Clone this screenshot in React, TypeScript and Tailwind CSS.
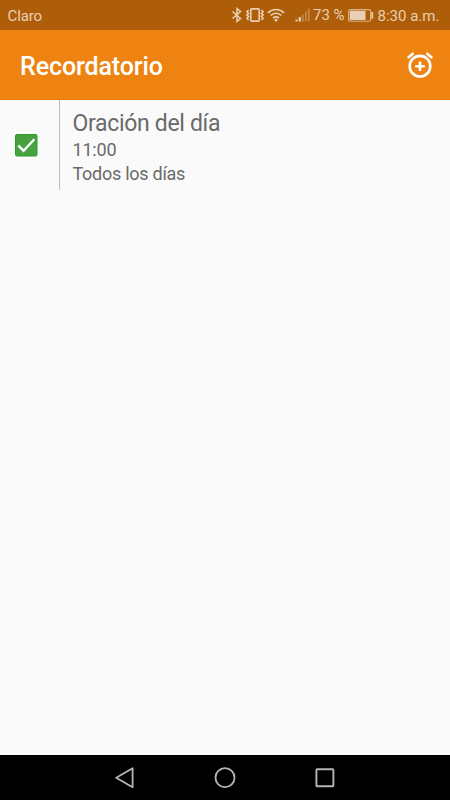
const BluetoothIcon = () => (
  <svg width="12" height="16" viewBox="0 0 12 16" fill="none" stroke="currentColor" strokeWidth="1.5">
    <path d="M1.5 4.5 9.5 11.5 6 14.5V1.5L9.5 4.5 1.5 11.5" />
  </svg>
);

const VibrateIcon = () => (
  <svg width="18" height="14" viewBox="0 0 18 14" fill="none" stroke="currentColor" strokeWidth="1.6">
    <rect x="4.8" y="0.9" width="8.4" height="12.2" rx="0.8" />
    <path d="M2.6 2 1 3.7 2.6 5.4 1 7 2.6 8.6 1 10.3 2.6 12" />
    <path d="M15.4 2 17 3.7 15.4 5.4 17 7 15.4 8.6 17 10.3 15.4 12" />
  </svg>
);

const WifiIcon = () => (
  <svg width="18" height="14" viewBox="0 0 18 14" fill="none" stroke="currentColor" strokeWidth="1.7">
    <path d="M1 4.8a11.3 11.3 0 0 1 16 0" />
    <path d="M3.6 7.5a7.6 7.6 0 0 1 10.8 0" />
    <path d="M6.1 10.1a4.1 4.1 0 0 1 5.8 0" />
    <circle cx="9" cy="12.2" r="1.4" fill="currentColor" stroke="none" />
  </svg>
);

const SignalIcon = () => (
  <svg width="15" height="14" viewBox="0 0 15 14" fill="currentColor">
    <rect x="0.5" y="11.5" width="2" height="2" />
    <rect x="3.7" y="9" width="2.2" height="4.5" />
    <rect x="7" y="6.5" width="1.6" height="7" opacity="0.4" />
    <rect x="10" y="3.5" width="1.6" height="10" opacity="0.4" />
    <rect x="13" y="0.8" width="1.6" height="12.7" opacity="0.4" />
  </svg>
);

const BatteryIcon = () => (
  <svg width="26" height="13" viewBox="0 0 26 13" fill="none">
    <rect x="0.6" y="0.6" width="22" height="11.6" rx="1.5" stroke="currentColor" strokeWidth="1.1" opacity="0.75" />
    <rect x="1.8" y="1.8" width="15.7" height="9.2" fill="currentColor" />
    <rect x="23.3" y="3" width="1.8" height="6.8" rx="0.5" fill="currentColor" />
  </svg>
);

const AddAlarmIcon = () => (
  <svg width="28" height="28" viewBox="0 0 28 28" fill="none" stroke="currentColor" strokeWidth="2.6">
    <circle cx="14" cy="15.2" r="10.3" />
    <path d="M14 10.4v9.6M9.2 15.2h9.6" />
    <path d="M1.8 6.9 7.6 2M26.2 6.9 20.4 2" />
  </svg>
);

const CheckedBox = () => (
  <svg width="23" height="23" viewBox="0 0 23 23" fill="none">
    <rect x="0.5" y="0.5" width="21.5" height="21.5" rx="1.4" fill="#47a140" stroke="#2a9e26" />
    <path d="M3.3 11.6 8.6 16.7 19.3 5.3" stroke="#fff" strokeWidth="2.4" />
  </svg>
);

function StatusBar() {
  return (
    <div className="flex h-[30px] items-center bg-[#ae5e09] pl-[7.5px] text-[15px] leading-[30px] text-[#e9cfb5]">
      <span className="w-[223px] shrink-0 pt-px tracking-[-0.1px]">Claro</span>
      <BluetoothIcon />
      <div className="ml-[3px]"><VibrateIcon /></div>
      <div className="ml-[3px]"><WifiIcon /></div>
      <div className="ml-[10.5px]"><SignalIcon /></div>
      <span className="ml-[3px] w-[35px] shrink-0 whitespace-nowrap">73 %</span>
      <BatteryIcon />
      <span className="ml-[3.5px] whitespace-nowrap pt-px">8:30 a.m.</span>
    </div>
  );
}

function Toolbar() {
  return (
    <header className="flex h-[70px] items-center justify-between border-b border-[#e6750a] bg-[#ee8311] pl-5 pr-4 text-white">
      <h1 className="pt-[4px] text-[25px] font-medium tracking-[-0.1px]">Recordatorio</h1>
      <AddAlarmIcon />
    </header>
  );
}

const reminders = [{ title: "Oración del día", time: "11:00", repeat: "Todos los días" }];

export default function App() {
  return (
    <div className="flex h-screen w-full flex-col overflow-hidden bg-[#fafafa] font-['Roboto',sans-serif]">
      <StatusBar />
      <Toolbar />
      <main className="flex-1">
        {reminders.map((item) => (
          <div key={item.title} className="flex h-[90px]">
            <div className="flex w-[60px] items-center border-r border-[#bdbdbd] pl-[15px]">
              <CheckedBox />
            </div>
            <div className="pl-[12.5px] text-[#6a6a6a]">
              <div className="pt-[9px] text-[23px] leading-[29px] tracking-[-0.32px]">{item.title}</div>
              <div className="text-[18px] leading-[24px] tracking-[-0.2px]">{item.time}</div>
              <div className="text-[18px] leading-[24px] tracking-[-0.27px]">{item.repeat}</div>
            </div>
          </div>
        ))}
      </main>
      <nav className="flex h-[45px] items-center justify-center gap-[78px] bg-black text-[#b5b5b5]">
        <svg width="22" height="22" viewBox="0 0 22 22" fill="none" stroke="currentColor" strokeWidth="1.8" strokeLinejoin="round">
          <path d="M18.6 1.2v19L2.2 10.7z" />
        </svg>
        <svg width="22" height="22" viewBox="0 0 22 22" fill="none" stroke="currentColor" strokeWidth="1.8">
          <circle cx="11" cy="10.7" r="9.5" />
        </svg>
        <svg width="22" height="22" viewBox="0 0 22 22" fill="none" stroke="currentColor" strokeWidth="1.9">
          <rect x="2.4" y="2.2" width="17" height="17" rx="0.8" />
        </svg>
      </nav>
    </div>
  );
}
